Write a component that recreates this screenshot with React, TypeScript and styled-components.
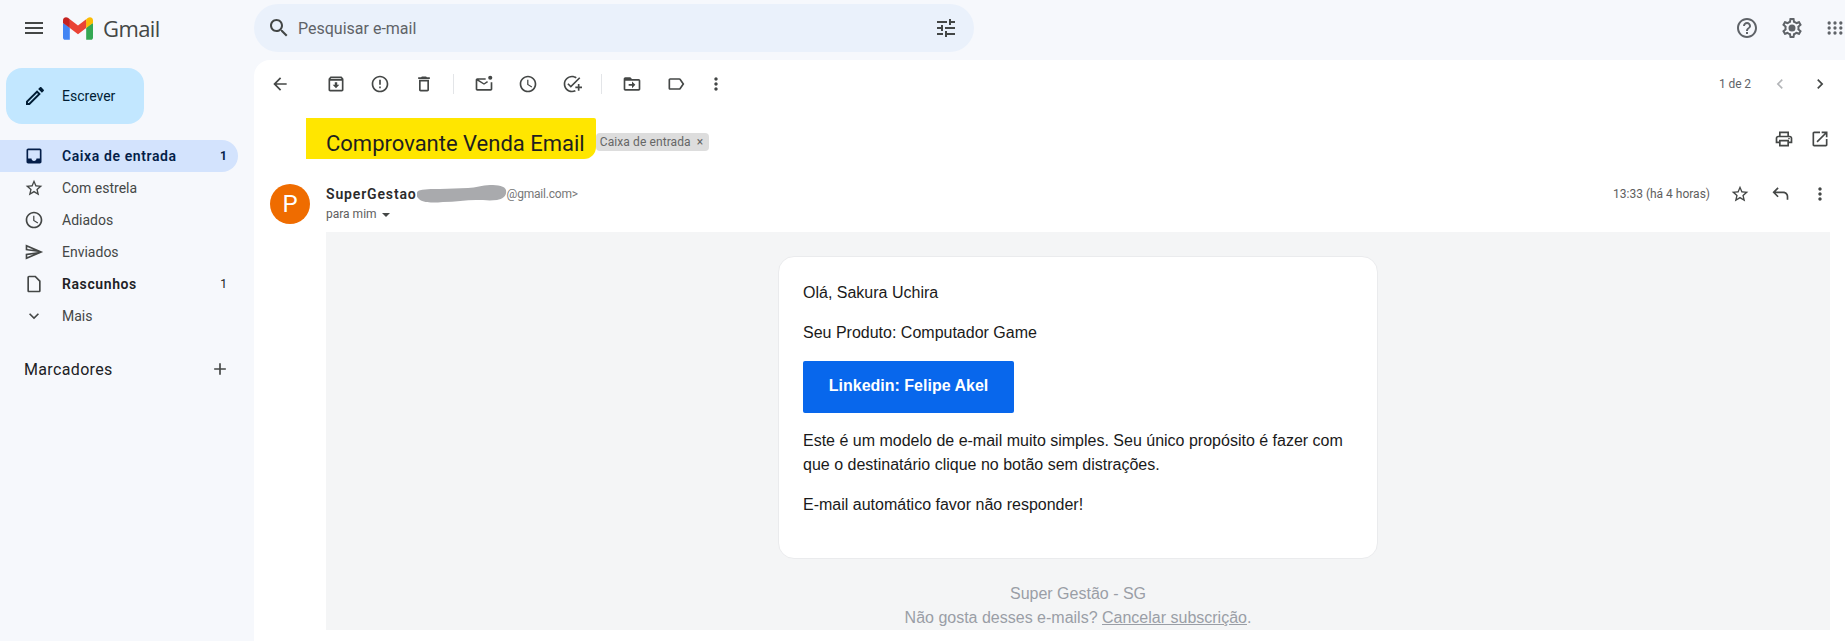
import styled, { createGlobalStyle } from 'styled-components';

const GlobalStyle = createGlobalStyle`
  html, body {
    margin: 0;
    padding: 0;
    background: #f6f8fc;
  }
  * {
    box-sizing: border-box;
  }
`;

const icons = {
  menu: 'M3 18h18v-2H3v2zm0-5h18v-2H3v2zm0-7v2h18V6H3z',
  search:
    'M15.5 14h-.79l-.28-.27C15.41 12.59 16 11.11 16 9.5 16 5.91 13.09 3 9.5 3S3 5.91 3 9.5 5.91 16 9.5 16c1.61 0 3.09-.59 4.23-1.57l.27.28v.79l5 4.99L20.49 19l-4.99-5zm-6 0C7.01 14 5 11.99 5 9.5S7.01 5 9.5 5 14 7.01 14 9.5 11.99 14 9.5 14z',
  tune: 'M3 17v2h6v-2H3zM3 5v2h10V5H3zm10 16v-2h8v-2h-8v-2h-2v6h2zM7 9v2H3v2h4v2h2V9H7zm14 4v-2H11v2h10zm-6-4h2V7h4V5h-4V3h-2v6z',
  help: 'M11 18h2v-2h-2v2zm1-16C6.48 2 2 6.48 2 12s4.48 10 10 10 10-4.48 10-10S17.52 2 12 2zm0 18c-4.41 0-8-3.59-8-8s3.59-8 8-8 8 3.59 8 8-3.59 8-8 8zm0-14c-2.21 0-4 1.79-4 4h2c0-1.1.9-2 2-2s2 .9 2 2c0 2-3 1.75-3 5h2c0-2.25 3-2.5 3-5 0-2.21-1.79-4-4-4z',
  settings:
    'M19.43 12.98c.04-.32.07-.64.07-.98 0-.34-.03-.66-.07-.98l2.11-1.65c.19-.15.24-.42.12-.64l-2-3.46c-.09-.16-.26-.25-.44-.25-.06 0-.12.01-.17.03l-2.49 1c-.52-.4-1.08-.73-1.69-.98l-.38-2.65C14.46 2.18 14.25 2 14 2h-4c-.25 0-.46.18-.49.42l-.38 2.65c-.61.25-1.17.59-1.69.98l-2.49-1c-.06-.02-.12-.03-.18-.03-.17 0-.34.09-.43.25l-2 3.46c-.13.22-.07.49.12.64l2.11 1.65c-.04.32-.07.65-.07.98 0 .33.03.66.07.98l-2.11 1.65c-.19.15-.24.42-.12.64l2 3.46c.09.16.26.25.44.25.06 0 .12-.01.17-.03l2.49-1c.52.4 1.08.73 1.69.98l.38 2.65c.03.24.24.42.49.42h4c.25 0 .46-.18.49-.42l.38-2.65c.61-.25 1.17-.59 1.69-.98l2.49 1c.06.02.12.03.18.03.17 0 .34-.09.43-.25l2-3.46c.12-.22.07-.49-.12-.64l-2.11-1.65zm-1.98-1.71c.04.31.05.52.05.73 0 .21-.02.43-.05.73l-.14 1.13.89.7 1.08.84-.7 1.21-1.27-.51-1.04-.42-.9.68c-.43.32-.84.56-1.25.73l-1.06.43-.16 1.13-.2 1.35h-1.4l-.19-1.35-.16-1.13-1.06-.43c-.43-.18-.83-.41-1.23-.71l-.91-.7-1.06.43-1.27.51-.7-1.21 1.08-.84.89-.7-.14-1.13c-.03-.31-.05-.54-.05-.74s.02-.43.05-.73l.14-1.13-.89-.7-1.08-.84.7-1.21 1.27.51 1.04.42.9-.68c.43-.32.84-.56 1.25-.73l1.06-.43.16-1.13.2-1.35h1.39l.19 1.35.16 1.13 1.06.43c.43.18.83.41 1.23.71l.91.7 1.06-.43 1.27-.51.7 1.21-1.07.85-.89.7.14 1.13zM12 8.5a3.5 3.5 0 1 0 0 7 3.5 3.5 0 0 0 0-7z',
  apps: 'M5 4a2 2 0 1 0 0 4 2 2 0 0 0 0-4zm7 0a2 2 0 1 0 0 4 2 2 0 0 0 0-4zm7 0a2 2 0 1 0 0 4 2 2 0 0 0 0-4zM5 10a2 2 0 1 0 0 4 2 2 0 0 0 0-4zm7 0a2 2 0 1 0 0 4 2 2 0 0 0 0-4zm7 0a2 2 0 1 0 0 4 2 2 0 0 0 0-4zM5 16a2 2 0 1 0 0 4 2 2 0 0 0 0-4zm7 0a2 2 0 1 0 0 4 2 2 0 0 0 0-4zm7 0a2 2 0 1 0 0 4 2 2 0 0 0 0-4z',
  edit: 'M14.06 9.02l.92.92L5.92 19H5v-.92l9.06-9.06M17.66 3c-.25 0-.51.1-.7.29l-1.83 1.83 3.75 3.75 1.83-1.83c.39-.39.39-1.02 0-1.41l-2.34-2.34c-.2-.2-.45-.29-.71-.29zm-3.6 3.19L3 17.25V21h3.75L17.81 9.94l-3.75-3.75z',
  inbox:
    'M19 3H5c-1.1 0-2 .9-2 2v14c0 1.1.9 2 2 2h14c1.1 0 2-.9 2-2V5c0-1.1-.9-2-2-2zm0 12h-4c0 1.66-1.35 3-3 3s-3-1.34-3-3H4.99V5H19v10z',
  star: 'M22 9.24l-7.19-.62L12 2 9.19 8.63 2 9.24l5.46 4.73L5.82 21 12 17.27 18.18 21l-1.63-7.03L22 9.24zM12 15.4l-3.76 2.27 1-4.28-3.32-2.88 4.38-.38L12 6.1l1.71 4.04 4.38.38-3.32 2.88 1 4.28L12 15.4z',
  clock:
    'M11.99 2C6.47 2 2 6.48 2 12s4.47 10 9.99 10C17.52 22 22 17.52 22 12S17.52 2 11.99 2zM12 20c-4.42 0-8-3.58-8-8s3.58-8 8-8 8 3.58 8 8-3.58 8-8 8zm.5-13H11v6l5.25 3.15.75-1.23-4.5-2.67z',
  send: 'M4.01 6.03l7.51 3.22-7.52-1 .01-2.22m7.5 8.72L4 17.97v-2.22l7.51-1M2.01 3L2 10l15 2-15 2 .01 7L23 12 2.01 3z',
  draft:
    'M14 2H6c-1.1 0-2 .9-2 2v16c0 1.1.9 2 2 2h12c1.1 0 2-.9 2-2V8l-6-6zm4 18H6V4h7l5 5v11z',
  expand: 'M16.59 8.59L12 13.17 7.41 8.59 6 10l6 6 6-6z',
  add: 'M19 13h-6v6h-2v-6H5v-2h6V5h2v6h6v2z',
  back: 'M20 11H7.83l5.59-5.59L12 4l-8 8 8 8 1.41-1.41L7.83 13H20v-2z',
  archive:
    'M20.54 5.23l-1.39-1.68C18.88 3.21 18.47 3 18 3H6c-.47 0-.88.21-1.16.55L3.46 5.23C3.17 5.57 3 6.02 3 6.5V19c0 1.1.9 2 2 2h14c1.1 0 2-.9 2-2V6.5c0-.48-.17-.93-.46-1.27zM6.24 5h11.52l.83 1H5.42l.82-1zM5 19V8h14v11H5zm8.45-9h-2.9v3H8l4 4 4-4h-2.55z',
  report:
    'M11 15h2v2h-2zm0-8h2v6h-2zm.99-5C6.47 2 2 6.48 2 12s4.47 10 9.99 10C17.52 22 22 17.52 22 12S17.52 2 11.99 2zM12 20c-4.42 0-8-3.58-8-8s3.58-8 8-8 8 3.58 8 8-3.58 8-8 8z',
  trash:
    'M16 9v10H8V9h8m-1.5-6h-5l-1 1H5v2h14V4h-3.5l-1-1zM18 7H6v12c0 1.1.9 2 2 2h8c1.1 0 2-.9 2-2V7z',
  unread:
    'M14 5H4c-1.1 0-2 .9-2 2v11c0 1.1.9 2 2 2h16c1.1 0 2-.9 2-2V10h-2v8H4V8l8 5 4.8-3-1.05-1.7L12 11 5.6 7H14zM19.5 2a2.5 2.5 0 1 0 0 5 2.5 2.5 0 0 0 0-5z',
  addTask:
    'M22 5.18L10.59 16.6l-4.24-4.24 1.41-1.41 2.83 2.83 10-10L22 5.18zM12 20c-4.41 0-8-3.59-8-8s3.59-8 8-8c1.57 0 3.04.46 4.28 1.25l1.45-1.45C16.1 2.67 14.13 2 12 2 6.48 2 2 6.48 2 12s4.48 10 10 10c1.73 0 3.36-.44 4.78-1.22l-1.5-1.5c-1 .46-2.11.72-3.28.72zm7-5h-3v2h3v3h2v-3h3v-2h-3v-3h-2v3z',
  move: 'M20 6h-8l-2-2H4c-1.1 0-1.99.9-1.99 2L2 18c0 1.1.9 2 2 2h16c1.1 0 2-.9 2-2V8c0-1.1-.9-2-2-2zm0 12H4V8h16v10zm-8-1l4-4-4-4v3H8v2h4v3z',
  label:
    'M17.63 5.84C17.27 5.33 16.67 5 16 5L5 5.01C3.9 5.01 3 5.9 3 7v10c0 1.1.9 1.99 2 1.99L16 19c.67 0 1.27-.33 1.63-.84L22 12l-4.37-6.16zM16 17H5V7h11l3.55 5L16 17z',
  more: 'M12 8c1.1 0 2-.9 2-2s-.9-2-2-2-2 .9-2 2 .9 2 2 2zm0 2c-1.1 0-2 .9-2 2s.9 2 2 2 2-.9 2-2-.9-2-2-2zm0 6c-1.1 0-2 .9-2 2s.9 2 2 2 2-.9 2-2-.9-2-2-2z',
  prev: 'M15.41 7.41L14 6l-6 6 6 6 1.41-1.41L10.83 12z',
  next: 'M10 6L8.59 7.41 13.17 12l-4.58 4.59L10 18l6-6z',
  print:
    'M19 8h-1V3H6v5H5c-1.66 0-3 1.34-3 3v6h4v4h12v-4h4v-6c0-1.66-1.34-3-3-3zM8 5h8v3H8V5zm8 14H8v-4h8v4zm2-4v-2H6v2H4v-4c0-.55.45-1 1-1h14c.55 0 1 .45 1 1v4h-2zm0-4.5a1 1 0 1 0 0 2 1 1 0 0 0 0-2z',
  open: 'M19 19H5V5h7V3H5c-1.11 0-2 .9-2 2v14c0 1.1.89 2 2 2h14c1.1 0 2-.9 2-2v-7h-2v7zM14 3v2h3.59l-9.83 9.83 1.41 1.41L19 6.41V10h2V3h-7z',
  reply:
    'M20 19v-4c0-2.2-1.8-4-4-4H6.83l3.58 3.59L9 16l-6-6 6-6 1.41 1.41L6.83 9H16c3.31 0 6 2.69 6 6v4h-2z',
};

type IconName = keyof typeof icons;

const Svg = styled.svg<{ $color?: string }>`
  display: block;
  flex: none;
  fill: ${(p) => p.$color || '#444746'};
`;

function Icon({ name, size = 20, color }: { name: IconName; size?: number; color?: string }) {
  return (
    <Svg viewBox="0 0 24 24" width={size} height={size} $color={color}>
      <path d={icons[name]} />
    </Svg>
  );
}

const Page = styled.div`
  display: flex;
  flex-direction: column;
  height: 100vh;
  overflow: hidden;
  font-family: Roboto, 'Liberation Sans', sans-serif;
  color: #202124;
`;

const Header = styled.header`
  display: flex;
  align-items: center;
  flex: none;
  height: 60px;
  padding-bottom: 4px;
`;

const Brand = styled.div`
  display: flex;
  align-items: center;
  flex: none;
  width: 254px;
  padding-left: 22px;
`;

const LogoWrap = styled.div`
  margin-left: 17px;
`;

const BrandName = styled.span`
  margin-left: 10px;
  margin-top: -1px;
  font-family: 'Open Sans', Roboto, sans-serif;
  font-size: 22px;
  letter-spacing: -0.6px;
  color: #444746;
`;

const SearchBar = styled.div`
  display: flex;
  align-items: center;
  width: 720px;
  height: 48px;
  padding: 0 16px 0 13px;
  border-radius: 24px;
  background: #eaf1fb;
`;

const SearchText = styled.span`
  flex: 1;
  margin-left: 7px;
  font-size: 16px;
  color: #5f6368;
`;

const HeaderActions = styled.div`
  display: flex;
  align-items: center;
  gap: 21px;
  margin-left: auto;
`;

const Workspace = styled.div`
  display: flex;
  flex: 1;
  min-height: 0;
`;

const Sidebar = styled.aside`
  flex: none;
  width: 254px;
  padding-top: 8px;
`;

const Compose = styled.div`
  display: flex;
  align-items: center;
  gap: 15px;
  width: 138px;
  height: 56px;
  margin-left: 6px;
  padding-left: 17px;
  border-radius: 16px;
  background: #c2e7ff;
  font-size: 14px;
  font-weight: 400;
  color: #001d35;
`;

const NavList = styled.nav`
  margin-top: 16px;
  width: 238px;
`;

const NavRow = styled.div<{ $active?: boolean; $bold?: boolean }>`
  display: flex;
  align-items: center;
  height: 32px;
  padding: 0 11px 0 24px;
  border-radius: 0 16px 16px 0;
  background: ${(p) => (p.$active ? '#d3e3fd' : 'transparent')};
  font-size: 14px;
  font-weight: ${(p) => (p.$active || p.$bold ? 600 : 400)};
  letter-spacing: ${(p) => (p.$active || p.$bold ? '0.6px' : '0')};
  color: ${(p) => (p.$active ? '#041e49' : p.$bold ? '#202124' : '#444746')};
`;

const NavLabel = styled.span`
  flex: 1;
  margin-left: 18px;
`;

const NavCount = styled.span<{ $active?: boolean }>`
  font-size: 12px;
  font-weight: ${(p) => (p.$active ? 700 : 400)};
  letter-spacing: 0;
`;

const LabelsHeading = styled.div`
  display: flex;
  align-items: center;
  justify-content: space-between;
  width: 238px;
  margin-top: 27px;
  padding: 0 8px 0 24px;
  font-size: 16px;
  letter-spacing: 0.35px;
  color: #202124;
`;

const Main = styled.main`
  display: flex;
  flex-direction: column;
  flex: 1;
  min-width: 0;
  border-radius: 16px 0 0 0;
  background: #fff;
`;

const Toolbar = styled.div`
  display: flex;
  align-items: center;
  flex: none;
  height: 48px;
  padding-left: 4px;
`;

const ToolButton = styled.div<{ $gap?: number }>`
  display: flex;
  align-items: center;
  justify-content: center;
  flex: none;
  width: 44px;
  height: 40px;
  margin-left: ${(p) => p.$gap || 0}px;
`;

const Divider = styled.div`
  flex: none;
  width: 1px;
  height: 20px;
  margin: 0 8px 0 7px;
  background: #e3e5e8;
`;

const Pager = styled.div`
  display: flex;
  align-items: center;
  margin-left: auto;
  padding-right: 5px;
  font-size: 12px;
  letter-spacing: -0.1px;
  color: #5f6368;
`;

const PagerCount = styled.span`
  margin-right: 9px;
`;

const SubjectRow = styled.div`
  display: flex;
  align-items: center;
  flex: none;
  height: 41px;
  margin-top: 10px;
  padding-left: 52px;
`;

const Subject = styled.h1`
  margin: 0;
  padding: 0 11px 0 20px;
  height: 41px;
  border-radius: 0 2px 12px 0;
  background: #ffe600;
  font-size: 22px;
  font-weight: 400;
  line-height: 51px;
  color: #1f1f1f;
  white-space: nowrap;
`;

const Chip = styled.span`
  display: flex;
  align-items: center;
  height: 18px;
  margin-top: 6px;
  padding: 0 6px 0 4px;
  border-radius: 4px;
  background: #dddddd;
  font-size: 12px;
  letter-spacing: 0.1px;
  color: #666;
  white-space: nowrap;
`;

const ChipClose = styled.span`
  margin-left: 6px;
`;

const SubjectActions = styled.div`
  display: flex;
  align-items: center;
  margin-left: auto;
  padding-right: 7px;
`;

const SmallButton = styled.div`
  display: flex;
  align-items: center;
  justify-content: center;
  width: 36px;
  height: 36px;
`;

const MessageHeader = styled.div`
  display: flex;
  flex: none;
  height: 48px;
  margin-top: 25px;
  padding-left: 16px;
`;

const Avatar = styled.div`
  display: flex;
  align-items: center;
  justify-content: center;
  flex: none;
  width: 40px;
  height: 40px;
  border-radius: 50%;
  background: #ef6c00;
  color: #fff;
  font-size: 24px;
`;

const SenderBlock = styled.div`
  flex: 1;
  margin-left: 16px;
`;

const SenderLine = styled.div`
  display: flex;
  align-items: center;
  height: 20px;
`;

const SenderName = styled.span`
  font-size: 14px;
  font-weight: 600;
  letter-spacing: 0.85px;
  color: #2b2b2b;
`;

const SenderMail = styled.span`
  font-size: 12px;
  letter-spacing: -0.2px;
  color: #777;
`;

const Recipient = styled.div`
  display: flex;
  align-items: center;
  gap: 5px;
  height: 20px;
  font-size: 12px;
  color: #5e5e5e;
`;

const Caret = styled.span`
  width: 0;
  height: 0;
  margin-top: 1px;
  border-left: 4px solid transparent;
  border-right: 4px solid transparent;
  border-top: 4px solid #444746;
`;

const MessageMeta = styled.div`
  display: flex;
  align-items: flex-start;
  padding-right: 5px;
`;

const Timestamp = styled.span`
  margin-right: 10px;
  font-size: 12px;
  line-height: 20px;
  color: #5e5e5e;
`;

const MetaButton = styled.div`
  display: flex;
  align-items: center;
  justify-content: center;
  width: 40px;
  height: 20px;
`;

const MailBody = styled.div`
  flex: 1;
  min-height: 0;
  margin: 0 15px 11px 72px;
  padding-top: 24px;
  overflow: hidden;
  background: #f4f5f6;
  font-family: 'Liberation Sans', Arial, sans-serif;
  font-size: 16px;
  line-height: 24px;
`;

const Card = styled.div`
  width: 600px;
  margin: 0 auto;
  padding: 24px 24px 25px;
  border: 1px solid #eaebed;
  border-radius: 16px;
  background: #fff;
  color: #1a1a1a;
`;

const Paragraph = styled.p`
  margin: 0 0 16px;
`;

const CtaButton = styled.a`
  display: block;
  width: 211px;
  height: 52px;
  margin-bottom: 16px;
  border-radius: 2px;
  background: #0867ec;
  color: #fff;
  font-weight: 700;
  line-height: 50px;
  text-align: center;
  text-decoration: none;
`;

const Footer = styled.div`
  margin-top: 23px;
  text-align: center;
  color: #9a9ea6;
`;

const FooterLink = styled.a`
  color: #9a9ea6;
  text-decoration: underline;
`;

function GmailLogo() {
  return (
    <svg viewBox="0 0 256 193" width="30" height="23" style={{ display: 'block' }}>
      <path fill="#4285F4" d="M58.182 192.05V93.14L27.507 65.077 0 49.504v125.091c0 9.658 7.825 17.455 17.455 17.455h40.727Z" />
      <path fill="#34A853" d="M197.818 192.05h40.727c9.659 0 17.455-7.826 17.455-17.455V49.505l-31.156 17.837-27.026 25.798v98.91Z" />
      <path fill="#EA4335" d="m58.182 93.14-4.174-38.647 4.174-36.989L128 69.868l69.818-52.364 4.669 34.992-4.669 40.644L128 145.504z" />
      <path fill="#FBBC04" d="M197.818 17.504V93.14L256 49.504V26.231c0-21.585-24.64-33.89-41.89-20.945l-16.292 12.218Z" />
      <path fill="#C5221F" d="m0 49.504 26.759 20.07L58.182 93.14V17.504L41.89 5.286C24.61-7.66 0 4.646 0 26.23v23.273Z" />
    </svg>
  );
}

function Scribble() {
  return (
    <svg viewBox="0 0 90 18" width="90" height="18" style={{ display: 'block', flex: 'none' }}>
      <path
        fill="#a9aaad"
        d="M1 6c5-2 14-2 22-2 10 0 18-1 28-1 8 0 14-3 22-3 8 0 15 1 16 5 1 6-3 9-9 10-8 1-13 0-21 0-10 0-21 2-33 2-10 1-20 1-24-3C-1 12-1 8 1 6z"
      />
    </svg>
  );
}

const navItems: { icon: IconName; label: string; count?: string; active?: boolean; bold?: boolean }[] = [
  { icon: 'inbox', label: 'Caixa de entrada', count: '1', active: true },
  { icon: 'star', label: 'Com estrela' },
  { icon: 'clock', label: 'Adiados' },
  { icon: 'send', label: 'Enviados' },
  { icon: 'draft', label: 'Rascunhos', count: '1', bold: true },
  { icon: 'expand', label: 'Mais' },
];

function App() {
  return (
    <Page>
      <GlobalStyle />
      <Header>
        <Brand>
          <Icon name="menu" size={24} />
          <LogoWrap>
            <GmailLogo />
          </LogoWrap>
          <BrandName>Gmail</BrandName>
        </Brand>
        <SearchBar>
          <Icon name="search" size={24} />
          <SearchText>Pesquisar e-mail</SearchText>
          <Icon name="tune" size={24} />
        </SearchBar>
        <HeaderActions>
          <Icon name="help" size={24} color="#5f6368" />
          <Icon name="settings" size={24} color="#5f6368" />
          <Icon name="apps" size={20} color="#5f6368" />
        </HeaderActions>
      </Header>
      <Workspace>
        <Sidebar>
          <Compose>
            <Icon name="edit" size={24} color="#001d35" />
            Escrever
          </Compose>
          <NavList>
            {navItems.map((item) => (
              <NavRow key={item.label} $active={item.active} $bold={item.bold}>
                <Icon name={item.icon} size={20} color={item.active ? '#041e49' : '#444746'} />
                <NavLabel>{item.label}</NavLabel>
                {item.count && <NavCount $active={item.active}>{item.count}</NavCount>}
              </NavRow>
            ))}
          </NavList>
          <LabelsHeading>
            Marcadores
            <Icon name="add" size={20} />
          </LabelsHeading>
        </Sidebar>
        <Main>
          <Toolbar>
            <ToolButton>
              <Icon name="back" />
            </ToolButton>
            <ToolButton $gap={12}>
              <Icon name="archive" />
            </ToolButton>
            <ToolButton>
              <Icon name="report" />
            </ToolButton>
            <ToolButton>
              <Icon name="trash" />
            </ToolButton>
            <Divider />
            <ToolButton>
              <Icon name="unread" />
            </ToolButton>
            <ToolButton>
              <Icon name="clock" />
            </ToolButton>
            <ToolButton>
              <Icon name="addTask" />
            </ToolButton>
            <Divider />
            <ToolButton>
              <Icon name="move" />
            </ToolButton>
            <ToolButton>
              <Icon name="label" />
            </ToolButton>
            <ToolButton $gap={-4}>
              <Icon name="more" />
            </ToolButton>
            <Pager>
              <PagerCount>1 de 2</PagerCount>
              <MetaButton>
                <Icon name="prev" color="#b4b6b9" />
              </MetaButton>
              <MetaButton>
                <Icon name="next" />
              </MetaButton>
            </Pager>
          </Toolbar>
          <SubjectRow>
            <Subject>Comprovante Venda Email</Subject>
            <Chip>
              Caixa de entrada
              <ChipClose>×</ChipClose>
            </Chip>
            <SubjectActions>
              <SmallButton>
                <Icon name="print" />
              </SmallButton>
              <SmallButton>
                <Icon name="open" />
              </SmallButton>
            </SubjectActions>
          </SubjectRow>
          <MessageHeader>
            <Avatar>P</Avatar>
            <SenderBlock>
              <SenderLine>
                <SenderName>SuperGestao</SenderName>
                <Scribble />
                <SenderMail>@gmail.com&gt;</SenderMail>
              </SenderLine>
              <Recipient>
                para mim
                <Caret />
              </Recipient>
            </SenderBlock>
            <MessageMeta>
              <Timestamp>13:33 (há 4 horas)</Timestamp>
              <MetaButton>
                <Icon name="star" />
              </MetaButton>
              <MetaButton>
                <Icon name="reply" />
              </MetaButton>
              <MetaButton>
                <Icon name="more" />
              </MetaButton>
            </MessageMeta>
          </MessageHeader>
          <MailBody>
            <Card>
              <Paragraph>Olá, Sakura Uchira</Paragraph>
              <Paragraph>Seu Produto: Computador Game</Paragraph>
              <CtaButton href="#">Linkedin: Felipe Akel</CtaButton>
              <Paragraph>
                Este é um modelo de e-mail muito simples. Seu único propósito é fazer com que o destinatário clique no
                botão sem distrações.
              </Paragraph>
              <Paragraph>E-mail automático favor não responder!</Paragraph>
            </Card>
            <Footer>
              Super Gestão - SG
              <br />
              Não gosta desses e-mails? <FooterLink href="#">Cancelar subscrição</FooterLink>.
            </Footer>
          </MailBody>
        </Main>
      </Workspace>
    </Page>
  );
}

export default App;
